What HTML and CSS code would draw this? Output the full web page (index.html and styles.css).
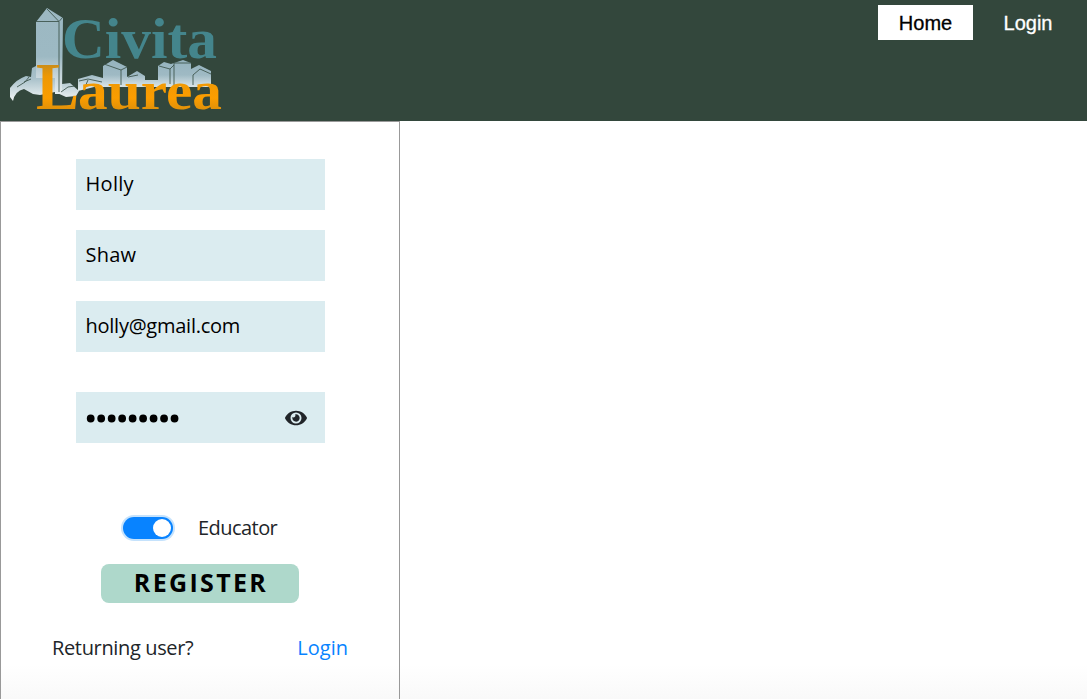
FILE: index.html
```html
<!DOCTYPE html>
<html lang="en">
<head>
<meta charset="utf-8">
<title>Civita Laurea</title>
<link rel="stylesheet" href="styles.css">
</head>
<body>
<header class="header">
  <svg class="logo" width="230" height="121" viewBox="0 0 230 121" role="img" aria-label="Civita Laurea">
    <defs>
      <linearGradient id="tower" gradientUnits="userSpaceOnUse" x1="0" y1="8" x2="0" y2="96">
        <stop offset="0" stop-color="#9cb8c2"/><stop offset="0.55" stop-color="#9db9c3"/><stop offset="0.75" stop-color="#c3d3d9"/><stop offset="1" stop-color="#e8eff1"/>
      </linearGradient>
      <linearGradient id="rock" gradientUnits="userSpaceOnUse" x1="0" y1="64" x2="0" y2="100">
        <stop offset="0" stop-color="#9cb8c2"/><stop offset="0.4" stop-color="#a9c1ca"/><stop offset="1" stop-color="#eef3f4"/>
      </linearGradient>
      <linearGradient id="village" gradientUnits="userSpaceOnUse" x1="0" y1="60" x2="0" y2="90">
        <stop offset="0" stop-color="#95b3be"/><stop offset="0.5" stop-color="#9fbac4"/><stop offset="0.85" stop-color="#d3e0e4"/><stop offset="1" stop-color="#dfe8eb"/>
      </linearGradient>
      <linearGradient id="gold" gradientUnits="userSpaceOnUse" x1="0" y1="62" x2="0" y2="110">
        <stop offset="0" stop-color="#c48a1c"/><stop offset="0.3" stop-color="#ed9805"/><stop offset="0.75" stop-color="#fb9d00"/><stop offset="1" stop-color="#df9009"/>
      </linearGradient>
    </defs>
    <text class="logo-top" x="62" y="58" textLength="155" lengthAdjust="spacingAndGlyphs">Civita</text>
    <path fill="url(#rock)" d="M10 88Q17 79 26 76L31 77L32 68L40 64H60L62 84L70 83L79 91L76 96L66 97L55 92L40 95L33 94L24 89Q15 91 13 101L10 97Z"/>
    <path fill="url(#tower)" d="M36 22L47 8L63 18L62 94H55V78H36Z"/>
    <path fill="url(#village)" d="M78 79L92 75L103 78V66L113 60L127 67V77L137 71L145 76V80H158V66L164 62L171 64L183 60L191 63V69L199 65L211 71V87H94L78 91Z"/>
    <path class="logo-lines" d="M36 21.500H59L47 9M59 21.500L63 17M59 22V92M17 87L25 82L29 77M24 82L31 79M61 92L68 87L75 86M79 81L88 79L102 82M88 80L85 87M104 64L121 70L127 67M121 70V85M128 77L138 75M159 66L170 69L174 65M170 69V84M174 63H191M174 63V85M193 75L200 69L211 74M193 75V85"/>
    <text class="logo-initial" x="36" y="108.500" textLength="43" lengthAdjust="spacingAndGlyphs">L</text>
    <text class="logo-bottom" x="78" y="108.500" textLength="144" lengthAdjust="spacingAndGlyphs">aurea</text>
  </svg>
  <nav class="nav">
    <a class="nav-link active">Home</a>
    <a class="nav-link">Login</a>
  </nav>
</header>
<main class="panel">
  <div class="field"><span class="holly">Holly</span></div>
  <div class="field"><span class="shaw">Shaw</span></div>
  <div class="field"><span class="email">holly@gmail.com</span></div>
  <div class="field password">
    <svg width="94" height="10" viewBox="0 0 94 10"><path d="M4.700 5.500h84" fill="none" stroke="#000" stroke-width="7.800" stroke-linecap="round" stroke-dasharray="0 10.480"/></svg>
    <svg width="22" height="22" viewBox="0 0 576 576"><path fill="#212529" fill-rule="evenodd" d="M572.500 273.400C518.300 167.600 410.900 96 288 96S57.700 167.600 3.500 273.400a32.400 32.400 0 0 0 0 29.200C57.700 408.400 165.100 480 288 480s230.300-71.600 284.500-177.400a32.400 32.400 0 0 0 0-29.200zM288 432a144 144 0 1 1 0-288 144 144 0 0 1 0 288zM288 192a95.300 95.300 0 0 0-25.300 3.800 48 48 0 0 1-66.900 66.900A96 96 0 1 0 288 192z"/></svg>
  </div>
  <div class="role"><span class="switch"><span class="knob"></span></span><span class="educator">Educator</span></div>
  <button class="register"><span>REGISTER</span></button>
  <div class="returning"><span class="question">Returning user?</span><a class="login">Login</a></div>
</main>
</body>
</html>
```
FILE: styles.css
```css
* { box-sizing: border-box; }
body {
  margin: 0;
  height: 699px;
  overflow: hidden;
  font: 20px/30px "Open Sans", "Noto Sans", sans-serif;
  color: #212529;
  background: linear-gradient(#fff 665px, #f9f9f9 699px);
}
.header {
  height: 121px;
  display: flex;
  justify-content: space-between;
  align-items: flex-start;
  background: #33473c;
}
.logo { display: block; }
.logo text { font-family: "Liberation Serif", serif; font-weight: bold; }
.logo-lines {
  fill: none;
  stroke: #40574f;
  stroke-width: 0.9;
  stroke-linejoin: round;
}
.logo-top { font-size: 58px; fill: #44858c; }
.logo-initial { font-size: 67px; fill: url(#gold); }
.logo-bottom { font-size: 54px; fill: url(#gold); }
.nav {
  display: flex;
  gap: 10px;
  padding: 5px 14px 0 0;
  font-family: "Liberation Sans", Arial, sans-serif;
}
.nav-link {
  width: 95px;
  height: 35px;
  line-height: 36px;
  text-align: center;
  color: #fff;
  -webkit-text-stroke: 0.3px;
}
.nav-link.active { background: #fff; color: #000; }
.nav-link:last-child { width: 90px; }
.panel {
  width: 400px;
  height: 600px;
  padding: 37px 51px 0;
  border: 1px solid #999;
  display: flex;
  flex-direction: column;
  align-items: center;
}
.field {
  width: 249px;
  height: 51px;
  flex: none;
  margin: 0 0 20px;
  padding: 0 18px 2px 10px;
  display: flex;
  align-items: center;
  justify-content: space-between;
  background: #dbecf0;
  color: #000;
}
.password { margin: 20px 0 0; padding-bottom: 0; }
.holly { letter-spacing: 0.3px; }
.shaw { letter-spacing: 0.25px; }
.email { letter-spacing: -0.25px; }
.role {
  width: 156px;
  height: 30px;
  margin-top: 70px;
  display: flex;
  align-items: center;
  gap: 25px;
}
.switch {
  width: 50px;
  height: 22px;
  flex: none;
  margin-left: 1px;
  padding: 2px;
  display: flex;
  justify-content: flex-end;
  border-radius: 11px;
  background: #0883ff;
  box-shadow: 0 0 0 2px #c5e2fc;
}
.knob { width: 18px; height: 18px; border-radius: 50%; background: #fff; }
.educator { letter-spacing: -0.55px; }
.register {
  width: 198px;
  height: 39px;
  margin-top: 21px;
  padding: 0 0 3px 2px;
  border: 0;
  border-radius: 8px;
  background: #aed8cb;
  color: #000;
  font: bold 25px/36px "Open Sans", sans-serif;
  letter-spacing: 2.35px;
}
.returning {
  width: 296px;
  margin-top: 30px;
  display: flex;
  justify-content: space-between;
}
.question { letter-spacing: -0.35px; }
.login { color: #0883ff; }
```
